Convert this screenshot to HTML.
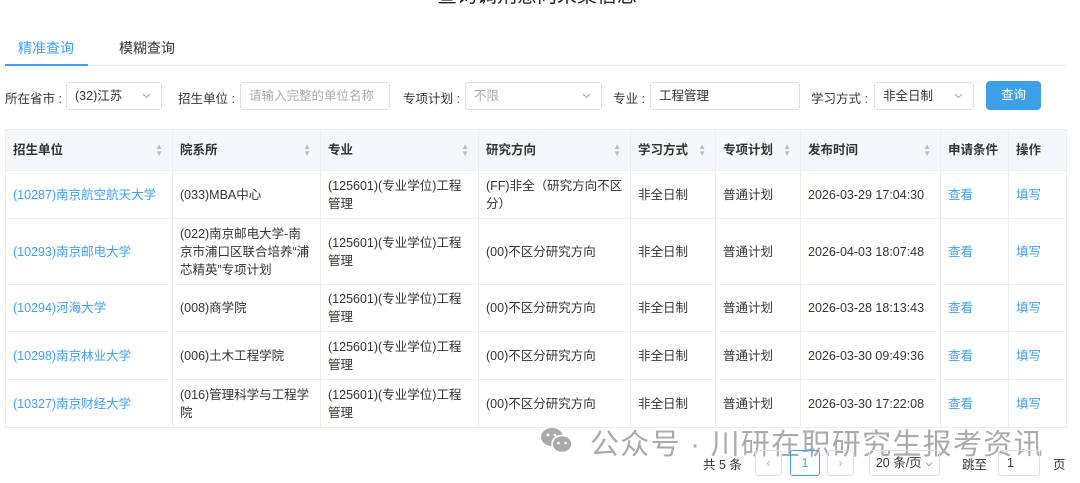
<!DOCTYPE html>
<html><head><meta charset="utf-8"><style>
*{margin:0;padding:0;box-sizing:border-box}
body{width:1080px;height:483px;overflow:hidden;background:#fff;font-family:"Liberation Sans","Noto Sans CJK SC",sans-serif;font-size:12.5px;color:#333;position:relative}
.a{position:absolute;white-space:nowrap}
.title{left:437px;top:-21px;font-size:20px;color:#222}
.inp{position:absolute;border:1px solid #dcdfe6;border-radius:4px;height:28px;top:82px;background:#fff;padding-left:8px;line-height:26px;font-size:12.5px;color:#333}
.arr{position:absolute;right:10px;top:10px}
table{position:absolute;left:5px;top:129px;border-collapse:collapse;table-layout:fixed;width:1061px}
td,th{border:1px solid #ebeef5;padding:0 7px;text-align:left;vertical-align:middle;line-height:18px;font-size:12.5px}
th{background:#f5f7fa;height:41px;font-weight:bold;color:#333;position:relative}
th .s{position:absolute;right:9px;top:13px;color:#bbb;font-size:8px;line-height:7px}
td.l{color:#409eff}
.pg{position:absolute;top:450px;height:26px;border:1px solid #dcdfe6;border-radius:3px;text-align:center;line-height:24px;font-size:12.5px}
.lb{position:absolute;top:88px;white-space:nowrap}
</style></head><body>
<div class="a title">查询调剂意向采集信息</div>
<div class="a" style="left:18px;top:38px;font-size:14px;color:#409eff">精准查询</div>
<div class="a" style="left:119px;top:38px;font-size:14px;color:#333">模糊查询</div>
<div class="a" style="left:5px;top:65px;width:1061px;height:1px;background:#e4e7ed"></div>
<div class="a" style="left:5px;top:64px;width:83px;height:2px;background:#409eff"></div>

<div class="lb" style="left:5px">所在省市 :</div>
<div class="inp" style="left:66px;width:96px">(32)江苏<svg class="arr" width="9" height="6" viewBox="0 0 9 6"><path d="M1 1l3.5 3.5L8 1" fill="none" stroke="#aaa" stroke-width="1"/></svg></div>
<div class="lb" style="left:178px">招生单位 :</div>
<div class="inp" style="left:240px;width:150px;color:#aaa">请输入完整的单位名称</div>
<div class="lb" style="left:403px">专项计划 :</div>
<div class="inp" style="left:465px;width:137px;color:#aaa">不限<svg class="arr" width="9" height="6" viewBox="0 0 9 6"><path d="M1 1l3.5 3.5L8 1" fill="none" stroke="#aaa" stroke-width="1"/></svg></div>
<div class="lb" style="left:613px">专业 :</div>
<div class="inp" style="left:650px;width:150px">工程管理</div>
<div class="lb" style="left:811px">学习方式 :</div>
<div class="inp" style="left:874px;width:100px">非全日制<svg class="arr" width="9" height="6" viewBox="0 0 9 6"><path d="M1 1l3.5 3.5L8 1" fill="none" stroke="#aaa" stroke-width="1"/></svg></div>
<div class="a" style="left:986px;top:81px;width:55px;height:29px;background:#3d9fe6;border-radius:4px;color:#fff;text-align:center;line-height:29px">查询</div>

<table>
<colgroup><col style="width:167px"><col style="width:148px"><col style="width:158px"><col style="width:152px"><col style="width:85px"><col style="width:85px"><col style="width:140px"><col style="width:68px"><col style="width:58px"></colgroup>
<tr><th>招生单位<span class="s">▲<br>▼</span></th><th>院系所<span class="s">▲<br>▼</span></th><th>专业<span class="s">▲<br>▼</span></th><th>研究方向<span class="s">▲<br>▼</span></th><th>学习方式<span class="s">▲<br>▼</span></th><th>专项计划<span class="s">▲<br>▼</span></th><th>发布时间<span class="s">▲<br>▼</span></th><th>申请条件</th><th>操作</th></tr>
<tr style="height:48px"><td class="l">(10287)南京航空航天大学</td><td>(033)MBA中心</td><td>(125601)(专业学位)工程管理</td><td>(FF)非全（研究方向不区分）</td><td>非全日制</td><td>普通计划</td><td>2026-03-29 17:04:30</td><td class="l">查看</td><td class="l">填写</td></tr>
<tr style="height:66px"><td class="l">(10293)南京邮电大学</td><td>(022)南京邮电大学-南京市浦口区联合培养“浦芯精英”专项计划</td><td>(125601)(专业学位)工程管理</td><td>(00)不区分研究方向</td><td>非全日制</td><td>普通计划</td><td>2026-04-03 18:07:48</td><td class="l">查看</td><td class="l">填写</td></tr>
<tr style="height:47px"><td class="l">(10294)河海大学</td><td>(008)商学院</td><td>(125601)(专业学位)工程管理</td><td>(00)不区分研究方向</td><td>非全日制</td><td>普通计划</td><td>2026-03-28 18:13:43</td><td class="l">查看</td><td class="l">填写</td></tr>
<tr style="height:48px"><td class="l">(10298)南京林业大学</td><td>(006)土木工程学院</td><td>(125601)(专业学位)工程管理</td><td>(00)不区分研究方向</td><td>非全日制</td><td>普通计划</td><td>2026-03-30 09:49:36</td><td class="l">查看</td><td class="l">填写</td></tr>
<tr style="height:48px"><td class="l">(10327)南京财经大学</td><td>(016)管理科学与工程学院</td><td>(125601)(专业学位)工程管理</td><td>(00)不区分研究方向</td><td>非全日制</td><td>普通计划</td><td>2026-03-30 17:22:08</td><td class="l">查看</td><td class="l">填写</td></tr>
</table>

<svg class="a" style="left:540px;top:425px" width="34" height="30" viewBox="0 0 34 30"><ellipse cx="12" cy="12" rx="11" ry="9" fill="#aaa"/><ellipse cx="22" cy="19" rx="10" ry="8.5" fill="#aaa" stroke="#fff" stroke-width="1.5"/><circle cx="8" cy="10" r="1.5" fill="#fff"/><circle cx="15" cy="10" r="1.5" fill="#fff"/><circle cx="18.5" cy="18" r="1.3" fill="#fff"/><circle cx="25.5" cy="18" r="1.3" fill="#fff"/></svg>
<div class="a" style="left:590px;top:421px;font-size:29px;color:#aaa;letter-spacing:1.3px">公众号 · 川研在职研究生报考资讯</div>

<div class="a" style="left:703px;top:454px">共 5 条</div>
<div class="pg" style="left:755px;width:27px;color:#bbb">‹</div>
<div class="pg" style="left:790px;width:30px;border-color:#409eff;color:#409eff">1</div>
<div class="pg" style="left:827px;width:27px;color:#bbb">›</div>
<div class="pg" style="left:869px;width:71px">20 条/页 <svg width="8" height="5" viewBox="0 0 9 6"><path d="M1 1l3.5 3.5L8 1" fill="none" stroke="#999" stroke-width="1"/></svg></div>
<div class="a" style="left:962px;top:454px">跳至</div>
<div class="pg" style="left:998px;width:42px;text-align:left;padding-left:8px">1</div>
<div class="a" style="left:1053px;top:454px">页</div>
</body></html>
